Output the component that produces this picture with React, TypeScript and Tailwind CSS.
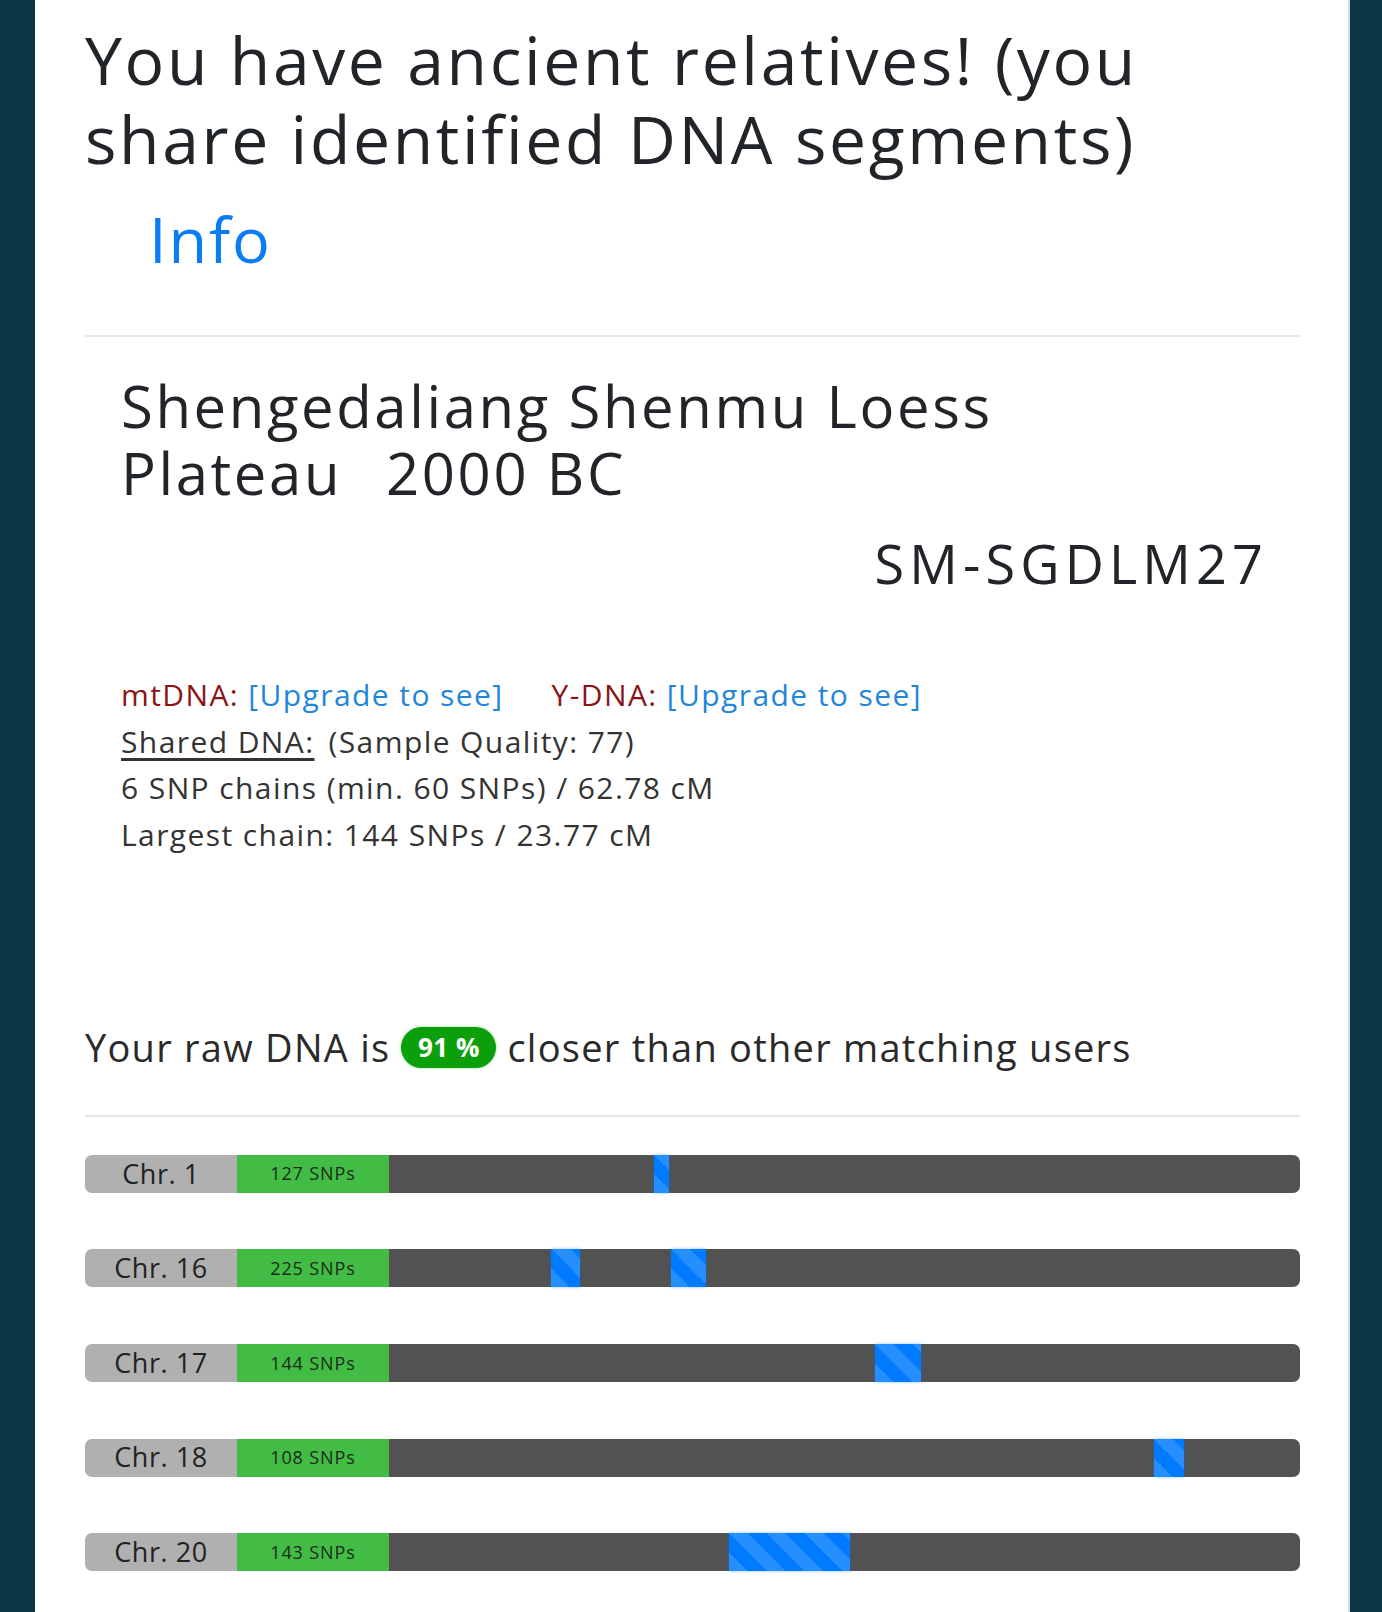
const chromosomes = [
  { name: "Chr. 1", snps: "127 SNPs", segments: [{ left: 265, width: 15 }] },
  {
    name: "Chr. 16",
    snps: "225 SNPs",
    segments: [
      { left: 162, width: 29 },
      { left: 282, width: 35 },
    ],
  },
  { name: "Chr. 17", snps: "144 SNPs", segments: [{ left: 486, width: 46 }] },
  { name: "Chr. 18", snps: "108 SNPs", segments: [{ left: 765, width: 30 }] },
  { name: "Chr. 20", snps: "143 SNPs", segments: [{ left: 340, width: 121 }] },
];

function ChromosomeBar({ chr }: { chr: (typeof chromosomes)[number] }) {
  return (
    <div className="flex h-[38px] w-full">
      {/* label */}
      <div className="flex w-[152px] shrink-0 items-center justify-center rounded-l-[7px] bg-[#b0b0b0] text-[27px] text-[#222] tracking-[0.02em]">
        {chr.name}
      </div>
      {/* snp count */}
      <div className="flex w-[152px] shrink-0 items-center justify-center bg-[#43bc45] text-[18px] text-[#1d2b1d] tracking-[0.05em]">
        {chr.snps}
      </div>
      {/* shared segments */}
      <div className="relative flex-1 rounded-r-[7px] bg-[#525252]">
        {chr.segments.map((seg, i) => (
          <div
            key={i}
            className="absolute top-0 h-full bg-[#007bff] bg-[linear-gradient(45deg,rgba(255,255,255,.15)_25%,transparent_25%,transparent_50%,rgba(255,255,255,.15)_50%,rgba(255,255,255,.15)_75%,transparent_75%,transparent)] bg-[length:38px_38px] shadow-[0_0_3px_rgba(0,123,255,0.45)]"
            style={{ left: seg.left, width: seg.width }}
          />
        ))}
      </div>
    </div>
  );
}

export default function App() {
  return (
    <div className="flex min-h-[1612px] w-full bg-[#0b3542] font-['Open_Sans',sans-serif]">
      <div className="ml-[35px] w-[1315px] border-r-2 border-[#d7dcdf] bg-white pl-[50px] pr-[48px] pt-[20px] pb-[40px]">
        {/* Header */}
        <h1 className="text-[66px] leading-[79.2px] text-[#212529] tracking-[0.04em]">
          You have ancient relatives! (you share identified DNA segments)
        </h1>
        <div className="mt-[23px] pl-[64px] text-[63px] leading-[75.6px] text-[#0a7cf5] tracking-[0.03em]">
          Info
        </div>
        <hr className="mt-[58px] border-t-2 border-[#e6e6e6]" />

        {/* Sample */}
        <div className="mt-[36px] max-w-[960px] pl-[36px] text-[58px] leading-[66.7px] text-[#212529] tracking-[0.045em]">
          <span className="inline-block">Shengedaliang Shenmu Loess</span>{" "}
          <span className="inline-block">Plateau</span>
          <span className="ml-[44px] inline-block">2000 BC</span>
        </div>
        <div className="mt-[26px] pr-[32px] text-right text-[54px] leading-[63.6px] text-[#212529] tracking-[0.095em]">
          SM-SGDLM27
        </div>

        <div className="mt-[76px] pl-[36px] text-[30px] leading-[46.7px] text-[#333] tracking-[0.047em]">
          <div>
            <span className="text-[#8b1414]">mtDNA: </span>
            <span className="text-[#1f86dc]">[Upgrade to see]</span>
            <span className="ml-[48px] text-[#8b1414]">Y-DNA: </span>
            <span className="text-[#1f86dc]">[Upgrade to see]</span>
          </div>
          <div>
            <span className="underline underline-offset-[5px]">Shared DNA:</span>
            <span className="ml-[14px]">(Sample Quality: 77)</span>
          </div>
          <div>6 SNP chains (min. 60 SNPs) / 62.78 cM</div>
          <div>Largest chain: 144 SNPs / 23.77 cM</div>
        </div>

        {/* Closeness */}
        <div className="mt-[160px] flex items-center text-[38px] leading-[57px] text-[#2a2a2a] tracking-[0.033em]">
          <span>Your raw DNA is</span>
          <span className="mx-[11px] inline-flex h-[41px] w-[95px] items-center justify-center rounded-full bg-[#0c9f0c] text-[26px] font-bold text-white tracking-[0.02em] shadow-[0_0_3px_rgba(60,200,60,0.6)]">
            91 %
          </span>
          <span>closer than other matching users</span>
        </div>
        <hr className="mt-[39px] border-t-2 border-[#e6e6e6]" />

        <div className="mt-[38px] flex flex-col gap-[56.6px]">
          {chromosomes.map((chr) => (
            <ChromosomeBar key={chr.name} chr={chr} />
          ))}
        </div>
      </div>
    </div>
  );
}
